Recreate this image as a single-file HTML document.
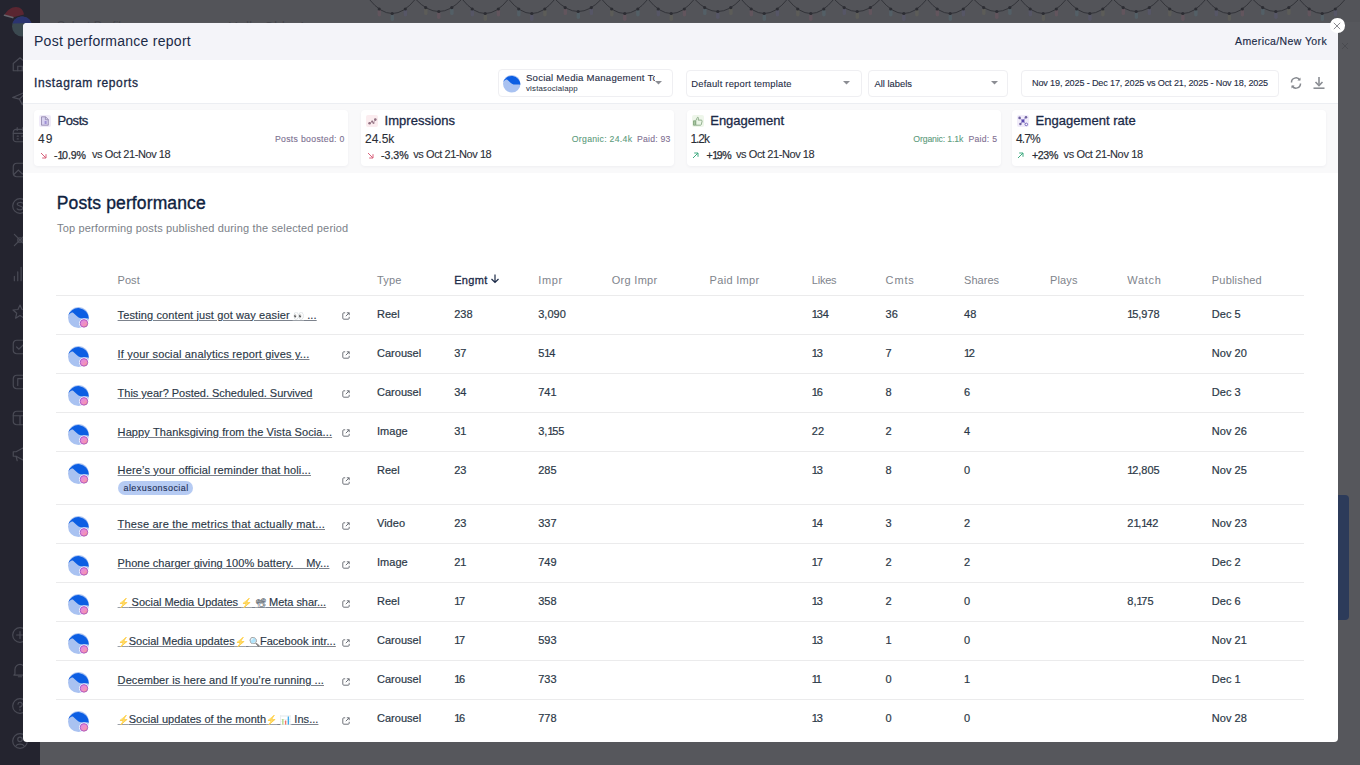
<!DOCTYPE html><html><head><meta charset="utf-8"><style>
*{box-sizing:border-box}
html,body{margin:0;padding:0}
body{width:1360px;height:765px;overflow:hidden;position:relative;background:#56575c;font-family:"Liberation Sans",sans-serif}
.t{position:absolute;white-space:nowrap;line-height:1}
.abs{position:absolute}
svg{position:absolute;overflow:visible}
.em{font-size:9px;opacity:0.75}
</style></head><body>
<svg style="left:0;top:0" width="0" height="0"><defs><linearGradient id="ig" x1="0" y1="0" x2="1" y2="1"><stop offset="0" stop-color="#d68ae8"/><stop offset="0.6" stop-color="#f28fc2"/><stop offset="1" stop-color="#f4a56a"/></linearGradient></defs></svg><div class="abs" style="left:0px;top:0px;width:40px;height:765px;background:#24242f"></div>
<div class="abs" style="left:40px;top:0px;width:1320px;height:22px;background:#535459"></div>
<svg style="left:0;top:0" width="1360" height="22" viewBox="0 0 1360 22"><path d="M369 -1 Q392.25 28 415.5 -1" fill="none" stroke="#2f3036" stroke-width="0.9"/><rect x="377.6" y="9.5" width="3.4" height="7" rx="1.7" fill="#7a5863" opacity="0.4"/><circle cx="379.2" cy="9.0" r="1.6" fill="#2c2d33"/><rect x="390.6" y="14.0" width="3.4" height="7" rx="1.7" fill="#56707a" opacity="0.4"/><circle cx="392.2" cy="13.5" r="1.6" fill="#2c2d33"/><rect x="403.7" y="9.5" width="3.4" height="7" rx="1.7" fill="#5d5a7a" opacity="0.4"/><circle cx="405.3" cy="9.0" r="1.6" fill="#2c2d33"/><path d="M415.5 -1 Q438.75 24 462.0 -1" fill="none" stroke="#2f3036" stroke-width="0.9"/><rect x="424.1" y="8.1" width="3.4" height="7" rx="1.7" fill="#6b6a58" opacity="0.4"/><circle cx="425.7" cy="7.6" r="1.6" fill="#2c2d33"/><rect x="437.1" y="12.0" width="3.4" height="7" rx="1.7" fill="#7a5863" opacity="0.4"/><circle cx="438.8" cy="11.5" r="1.6" fill="#2c2d33"/><rect x="450.2" y="8.1" width="3.4" height="7" rx="1.7" fill="#56707a" opacity="0.4"/><circle cx="451.8" cy="7.6" r="1.6" fill="#2c2d33"/><path d="M462.0 -1 Q485.25 28 508.5 -1" fill="none" stroke="#2f3036" stroke-width="0.9"/><rect x="470.6" y="9.5" width="3.4" height="7" rx="1.7" fill="#5d5a7a" opacity="0.4"/><circle cx="472.2" cy="9.0" r="1.6" fill="#2c2d33"/><rect x="483.6" y="14.0" width="3.4" height="7" rx="1.7" fill="#6b6a58" opacity="0.4"/><circle cx="485.2" cy="13.5" r="1.6" fill="#2c2d33"/><rect x="496.7" y="9.5" width="3.4" height="7" rx="1.7" fill="#7a5863" opacity="0.4"/><circle cx="498.3" cy="9.0" r="1.6" fill="#2c2d33"/><path d="M508.5 -1 Q531.75 28 555.0 -1" fill="none" stroke="#2f3036" stroke-width="0.9"/><rect x="517.1" y="9.5" width="3.4" height="7" rx="1.7" fill="#56707a" opacity="0.4"/><circle cx="518.7" cy="9.0" r="1.6" fill="#2c2d33"/><rect x="530.1" y="14.0" width="3.4" height="7" rx="1.7" fill="#5d5a7a" opacity="0.4"/><circle cx="531.8" cy="13.5" r="1.6" fill="#2c2d33"/><rect x="543.2" y="9.5" width="3.4" height="7" rx="1.7" fill="#6b6a58" opacity="0.4"/><circle cx="544.8" cy="9.0" r="1.6" fill="#2c2d33"/><path d="M555.0 -1 Q578.25 24 601.5 -1" fill="none" stroke="#2f3036" stroke-width="0.9"/><rect x="563.6" y="8.1" width="3.4" height="7" rx="1.7" fill="#7a5863" opacity="0.4"/><circle cx="565.2" cy="7.6" r="1.6" fill="#2c2d33"/><rect x="576.6" y="12.0" width="3.4" height="7" rx="1.7" fill="#56707a" opacity="0.4"/><circle cx="578.2" cy="11.5" r="1.6" fill="#2c2d33"/><rect x="589.7" y="8.1" width="3.4" height="7" rx="1.7" fill="#5d5a7a" opacity="0.4"/><circle cx="591.3" cy="7.6" r="1.6" fill="#2c2d33"/><path d="M601.5 -1 Q624.75 28 648.0 -1" fill="none" stroke="#2f3036" stroke-width="0.9"/><rect x="610.1" y="9.5" width="3.4" height="7" rx="1.7" fill="#6b6a58" opacity="0.4"/><circle cx="611.7" cy="9.0" r="1.6" fill="#2c2d33"/><rect x="623.1" y="14.0" width="3.4" height="7" rx="1.7" fill="#7a5863" opacity="0.4"/><circle cx="624.8" cy="13.5" r="1.6" fill="#2c2d33"/><rect x="636.2" y="9.5" width="3.4" height="7" rx="1.7" fill="#56707a" opacity="0.4"/><circle cx="637.8" cy="9.0" r="1.6" fill="#2c2d33"/><path d="M648.0 -1 Q671.25 28 694.5 -1" fill="none" stroke="#2f3036" stroke-width="0.9"/><rect x="656.6" y="9.5" width="3.4" height="7" rx="1.7" fill="#5d5a7a" opacity="0.4"/><circle cx="658.2" cy="9.0" r="1.6" fill="#2c2d33"/><rect x="669.6" y="14.0" width="3.4" height="7" rx="1.7" fill="#6b6a58" opacity="0.4"/><circle cx="671.2" cy="13.5" r="1.6" fill="#2c2d33"/><rect x="682.7" y="9.5" width="3.4" height="7" rx="1.7" fill="#7a5863" opacity="0.4"/><circle cx="684.3" cy="9.0" r="1.6" fill="#2c2d33"/><path d="M694.5 -1 Q717.75 24 741.0 -1" fill="none" stroke="#2f3036" stroke-width="0.9"/><rect x="703.1" y="8.1" width="3.4" height="7" rx="1.7" fill="#56707a" opacity="0.4"/><circle cx="704.7" cy="7.6" r="1.6" fill="#2c2d33"/><rect x="716.1" y="12.0" width="3.4" height="7" rx="1.7" fill="#5d5a7a" opacity="0.4"/><circle cx="717.8" cy="11.5" r="1.6" fill="#2c2d33"/><rect x="729.2" y="8.1" width="3.4" height="7" rx="1.7" fill="#6b6a58" opacity="0.4"/><circle cx="730.8" cy="7.6" r="1.6" fill="#2c2d33"/><path d="M741.0 -1 Q764.25 28 787.5 -1" fill="none" stroke="#2f3036" stroke-width="0.9"/><rect x="749.6" y="9.5" width="3.4" height="7" rx="1.7" fill="#7a5863" opacity="0.4"/><circle cx="751.2" cy="9.0" r="1.6" fill="#2c2d33"/><rect x="762.6" y="14.0" width="3.4" height="7" rx="1.7" fill="#56707a" opacity="0.4"/><circle cx="764.2" cy="13.5" r="1.6" fill="#2c2d33"/><rect x="775.7" y="9.5" width="3.4" height="7" rx="1.7" fill="#5d5a7a" opacity="0.4"/><circle cx="777.3" cy="9.0" r="1.6" fill="#2c2d33"/><path d="M787.5 -1 Q810.75 28 834.0 -1" fill="none" stroke="#2f3036" stroke-width="0.9"/><rect x="796.1" y="9.5" width="3.4" height="7" rx="1.7" fill="#6b6a58" opacity="0.4"/><circle cx="797.7" cy="9.0" r="1.6" fill="#2c2d33"/><rect x="809.1" y="14.0" width="3.4" height="7" rx="1.7" fill="#7a5863" opacity="0.4"/><circle cx="810.8" cy="13.5" r="1.6" fill="#2c2d33"/><rect x="822.2" y="9.5" width="3.4" height="7" rx="1.7" fill="#56707a" opacity="0.4"/><circle cx="823.8" cy="9.0" r="1.6" fill="#2c2d33"/><path d="M834.0 -1 Q857.25 24 880.5 -1" fill="none" stroke="#2f3036" stroke-width="0.9"/><rect x="842.6" y="8.1" width="3.4" height="7" rx="1.7" fill="#5d5a7a" opacity="0.4"/><circle cx="844.2" cy="7.6" r="1.6" fill="#2c2d33"/><rect x="855.6" y="12.0" width="3.4" height="7" rx="1.7" fill="#6b6a58" opacity="0.4"/><circle cx="857.2" cy="11.5" r="1.6" fill="#2c2d33"/><rect x="868.7" y="8.1" width="3.4" height="7" rx="1.7" fill="#7a5863" opacity="0.4"/><circle cx="870.3" cy="7.6" r="1.6" fill="#2c2d33"/><path d="M880.5 -1 Q903.75 28 927.0 -1" fill="none" stroke="#2f3036" stroke-width="0.9"/><rect x="889.1" y="9.5" width="3.4" height="7" rx="1.7" fill="#56707a" opacity="0.4"/><circle cx="890.7" cy="9.0" r="1.6" fill="#2c2d33"/><rect x="902.1" y="14.0" width="3.4" height="7" rx="1.7" fill="#5d5a7a" opacity="0.4"/><circle cx="903.8" cy="13.5" r="1.6" fill="#2c2d33"/><rect x="915.2" y="9.5" width="3.4" height="7" rx="1.7" fill="#6b6a58" opacity="0.4"/><circle cx="916.8" cy="9.0" r="1.6" fill="#2c2d33"/><path d="M927.0 -1 Q950.25 28 973.5 -1" fill="none" stroke="#2f3036" stroke-width="0.9"/><rect x="935.6" y="9.5" width="3.4" height="7" rx="1.7" fill="#7a5863" opacity="0.4"/><circle cx="937.2" cy="9.0" r="1.6" fill="#2c2d33"/><rect x="948.6" y="14.0" width="3.4" height="7" rx="1.7" fill="#56707a" opacity="0.4"/><circle cx="950.2" cy="13.5" r="1.6" fill="#2c2d33"/><rect x="961.7" y="9.5" width="3.4" height="7" rx="1.7" fill="#5d5a7a" opacity="0.4"/><circle cx="963.3" cy="9.0" r="1.6" fill="#2c2d33"/><path d="M973.5 -1 Q996.75 24 1020.0 -1" fill="none" stroke="#2f3036" stroke-width="0.9"/><rect x="982.1" y="8.1" width="3.4" height="7" rx="1.7" fill="#6b6a58" opacity="0.4"/><circle cx="983.7" cy="7.6" r="1.6" fill="#2c2d33"/><rect x="995.1" y="12.0" width="3.4" height="7" rx="1.7" fill="#7a5863" opacity="0.4"/><circle cx="996.8" cy="11.5" r="1.6" fill="#2c2d33"/><rect x="1008.2" y="8.1" width="3.4" height="7" rx="1.7" fill="#56707a" opacity="0.4"/><circle cx="1009.8" cy="7.6" r="1.6" fill="#2c2d33"/><path d="M1020.0 -1 Q1043.25 28 1066.5 -1" fill="none" stroke="#2f3036" stroke-width="0.9"/><rect x="1028.6" y="9.5" width="3.4" height="7" rx="1.7" fill="#5d5a7a" opacity="0.4"/><circle cx="1030.2" cy="9.0" r="1.6" fill="#2c2d33"/><rect x="1041.7" y="14.0" width="3.4" height="7" rx="1.7" fill="#6b6a58" opacity="0.4"/><circle cx="1043.2" cy="13.5" r="1.6" fill="#2c2d33"/><rect x="1054.7" y="9.5" width="3.4" height="7" rx="1.7" fill="#7a5863" opacity="0.4"/><circle cx="1056.3" cy="9.0" r="1.6" fill="#2c2d33"/><path d="M1066.5 -1 Q1089.75 28 1113.0 -1" fill="none" stroke="#2f3036" stroke-width="0.9"/><rect x="1075.1" y="9.5" width="3.4" height="7" rx="1.7" fill="#56707a" opacity="0.4"/><circle cx="1076.7" cy="9.0" r="1.6" fill="#2c2d33"/><rect x="1088.2" y="14.0" width="3.4" height="7" rx="1.7" fill="#5d5a7a" opacity="0.4"/><circle cx="1089.8" cy="13.5" r="1.6" fill="#2c2d33"/><rect x="1101.2" y="9.5" width="3.4" height="7" rx="1.7" fill="#6b6a58" opacity="0.4"/><circle cx="1102.8" cy="9.0" r="1.6" fill="#2c2d33"/><path d="M1113.0 -1 Q1136.25 24 1159.5 -1" fill="none" stroke="#2f3036" stroke-width="0.9"/><rect x="1121.6" y="8.1" width="3.4" height="7" rx="1.7" fill="#7a5863" opacity="0.4"/><circle cx="1123.2" cy="7.6" r="1.6" fill="#2c2d33"/><rect x="1134.7" y="12.0" width="3.4" height="7" rx="1.7" fill="#56707a" opacity="0.4"/><circle cx="1136.2" cy="11.5" r="1.6" fill="#2c2d33"/><rect x="1147.7" y="8.1" width="3.4" height="7" rx="1.7" fill="#5d5a7a" opacity="0.4"/><circle cx="1149.3" cy="7.6" r="1.6" fill="#2c2d33"/><path d="M1159.5 -1 Q1182.75 28 1206.0 -1" fill="none" stroke="#2f3036" stroke-width="0.9"/><rect x="1168.1" y="9.5" width="3.4" height="7" rx="1.7" fill="#6b6a58" opacity="0.4"/><circle cx="1169.7" cy="9.0" r="1.6" fill="#2c2d33"/><rect x="1181.2" y="14.0" width="3.4" height="7" rx="1.7" fill="#7a5863" opacity="0.4"/><circle cx="1182.8" cy="13.5" r="1.6" fill="#2c2d33"/><rect x="1194.2" y="9.5" width="3.4" height="7" rx="1.7" fill="#56707a" opacity="0.4"/><circle cx="1195.8" cy="9.0" r="1.6" fill="#2c2d33"/><path d="M1206.0 -1 Q1229.25 28 1252.5 -1" fill="none" stroke="#2f3036" stroke-width="0.9"/><rect x="1214.6" y="9.5" width="3.4" height="7" rx="1.7" fill="#5d5a7a" opacity="0.4"/><circle cx="1216.2" cy="9.0" r="1.6" fill="#2c2d33"/><rect x="1227.7" y="14.0" width="3.4" height="7" rx="1.7" fill="#6b6a58" opacity="0.4"/><circle cx="1229.2" cy="13.5" r="1.6" fill="#2c2d33"/><rect x="1240.7" y="9.5" width="3.4" height="7" rx="1.7" fill="#7a5863" opacity="0.4"/><circle cx="1242.3" cy="9.0" r="1.6" fill="#2c2d33"/><path d="M1252.5 -1 Q1275.75 24 1299.0 -1" fill="none" stroke="#2f3036" stroke-width="0.9"/><rect x="1261.1" y="8.1" width="3.4" height="7" rx="1.7" fill="#56707a" opacity="0.4"/><circle cx="1262.7" cy="7.6" r="1.6" fill="#2c2d33"/><rect x="1274.2" y="12.0" width="3.4" height="7" rx="1.7" fill="#5d5a7a" opacity="0.4"/><circle cx="1275.8" cy="11.5" r="1.6" fill="#2c2d33"/><rect x="1287.2" y="8.1" width="3.4" height="7" rx="1.7" fill="#6b6a58" opacity="0.4"/><circle cx="1288.8" cy="7.6" r="1.6" fill="#2c2d33"/><path d="M1299.0 -1 Q1322.25 28 1345.5 -1" fill="none" stroke="#2f3036" stroke-width="0.9"/><rect x="1307.6" y="9.5" width="3.4" height="7" rx="1.7" fill="#7a5863" opacity="0.4"/><circle cx="1309.2" cy="9.0" r="1.6" fill="#2c2d33"/><rect x="1320.7" y="14.0" width="3.4" height="7" rx="1.7" fill="#56707a" opacity="0.4"/><circle cx="1322.2" cy="13.5" r="1.6" fill="#2c2d33"/><rect x="1333.7" y="9.5" width="3.4" height="7" rx="1.7" fill="#5d5a7a" opacity="0.4"/><circle cx="1335.3" cy="9.0" r="1.6" fill="#2c2d33"/></svg>
<div class="t" style="left:57.00px;top:20.34px;font-size:12px;color:#45464c;">Select Profiles</div>
<div class="t" style="left:228.00px;top:20.15px;font-size:14px;color:#45464c;">Hello Chloe!</div>
<svg style="left:1341px;top:42px" width="8" height="8"><path d="M1 1L7 7M7 1L1 7" stroke="#4a4b50" stroke-width="1"/></svg>
<div class="abs" style="left:1336px;top:495px;width:13px;height:125px;background:#2c3b5a;border-radius:0 4px 4px 0"></div>
<svg style="left:11px;top:55px" width="18" height="18" viewBox="0 0 16 16"><g fill="none" stroke="#4a4b56" stroke-width="1.05" stroke-linecap="round"><path d="M2 7.5L8 2.5L14 7.5V14H2Z" stroke-linejoin="round"/><path d="M6 14V10H10V14"/></g></svg>
<svg style="left:11px;top:89px" width="18" height="18" viewBox="0 0 16 16"><g fill="none" stroke="#4a4b56" stroke-width="1.05" stroke-linecap="round"><path d="M1.5 7.5L14.5 2L10 14L7.5 9Z" stroke-linejoin="round"/><path d="M7.5 9L14.5 2"/></g></svg>
<svg style="left:11px;top:126px" width="18" height="18" viewBox="0 0 16 16"><g fill="none" stroke="#4a4b56" stroke-width="1.05" stroke-linecap="round"><rect x="2" y="3" width="12" height="11" rx="2.5"/><path d="M2 6.5H14M5.5 1.5V4M10.5 1.5V4M5.5 9H6.5M9.5 9H10.5M5.5 11.5H6.5"/></g></svg>
<svg style="left:11px;top:161px" width="18" height="18" viewBox="0 0 16 16"><g fill="none" stroke="#4a4b56" stroke-width="1.05" stroke-linecap="round"><rect x="2" y="2" width="12" height="12" rx="3"/><path d="M2.5 12L6.5 8L10 11.5L14 8"/></g></svg>
<svg style="left:11px;top:197px" width="18" height="18" viewBox="0 0 16 16"><g fill="none" stroke="#4a4b56" stroke-width="1.05" stroke-linecap="round"><circle cx="8" cy="8" r="6.5"/><path d="M10.5 5.5C9.5 4.5 5.5 4.5 5.5 6.5C5.5 8.5 10.5 7.5 10.5 9.8C10.5 11.8 6.5 11.8 5.5 10.5"/></g></svg>
<svg style="left:11px;top:231px" width="18" height="18" viewBox="0 0 16 16"><g fill="none" stroke="#4a4b56" stroke-width="1.05" stroke-linecap="round"><path d="M3 3C6 6 10 10 13 13M13 3C10 6 6 10 3 13"/><circle cx="8" cy="8" r="2"/></g></svg>
<svg style="left:11px;top:265px" width="18" height="18" viewBox="0 0 16 16"><g fill="none" stroke="#4a4b56" stroke-width="1.05" stroke-linecap="round"><path d="M3 10V14M6 6V14M9 2V14M12 8V14"/></g></svg>
<svg style="left:11px;top:303px" width="18" height="18" viewBox="0 0 16 16"><g fill="none" stroke="#4a4b56" stroke-width="1.05" stroke-linecap="round"><path d="M8 1.8L9.8 5.8L14.2 6.2L10.9 9.1L11.9 13.5L8 11.2L4.1 13.5L5.1 9.1L1.8 6.2L6.2 5.8Z" stroke-linejoin="round"/></g></svg>
<svg style="left:11px;top:338px" width="18" height="18" viewBox="0 0 16 16"><g fill="none" stroke="#4a4b56" stroke-width="1.05" stroke-linecap="round"><rect x="2" y="2" width="12" height="12" rx="3"/><path d="M5 8L7 10L11 6"/></g></svg>
<svg style="left:11px;top:373px" width="18" height="18" viewBox="0 0 16 16"><g fill="none" stroke="#4a4b56" stroke-width="1.05" stroke-linecap="round"><rect x="2" y="2" width="12" height="12" rx="3"/><path d="M6 5V11M6 5H10"/></g></svg>
<svg style="left:11px;top:409px" width="18" height="18" viewBox="0 0 16 16"><g fill="none" stroke="#4a4b56" stroke-width="1.05" stroke-linecap="round"><rect x="2" y="2" width="12" height="12" rx="3"/><path d="M2 6H14M8 6V14"/></g></svg>
<svg style="left:11px;top:445px" width="18" height="18" viewBox="0 0 16 16"><g fill="none" stroke="#4a4b56" stroke-width="1.05" stroke-linecap="round"><path d="M2 6V10H4.5L11 13.5V2.5L4.5 6Z" stroke-linejoin="round"/><path d="M4.5 10L5.5 14"/></g></svg>
<svg style="left:11px;top:626px" width="18" height="18" viewBox="0 0 16 16"><g fill="none" stroke="#4a4b56" stroke-width="1.05" stroke-linecap="round"><circle cx="8" cy="8" r="6.5"/><path d="M8 5V11M5 8H11"/></g></svg>
<svg style="left:11px;top:661px" width="18" height="18" viewBox="0 0 16 16"><g fill="none" stroke="#4a4b56" stroke-width="1.05" stroke-linecap="round"><path d="M3.5 11.5V7.5A4.5 4.5 0 0 1 12.5 7.5V11.5L13.5 12.5H2.5Z" stroke-linejoin="round"/><path d="M6.5 14H9.5"/></g></svg>
<svg style="left:11px;top:697px" width="18" height="18" viewBox="0 0 16 16"><g fill="none" stroke="#4a4b56" stroke-width="1.05" stroke-linecap="round"><circle cx="8" cy="8" r="6.5"/><path d="M6.2 6.3A1.9 1.9 0 1 1 8 8.5V9.5M8 11.2V11.8"/></g></svg>
<svg style="left:11px;top:732px" width="18" height="18" viewBox="0 0 16 16"><g fill="none" stroke="#4a4b56" stroke-width="1.05" stroke-linecap="round"><circle cx="8" cy="8" r="6.5"/><circle cx="8" cy="6.5" r="2"/><path d="M4.5 12.2C5.5 10.2 10.5 10.2 11.5 12.2"/></g></svg>
<svg style="left:0;top:0" width="40" height="40" viewBox="0 0 40 40"><circle cx="22" cy="26.5" r="10" fill="#3b4950"/><path d="M12.5 23.5C14 18.5 18 16.5 22 16.5C26 16.5 30 18.5 31.5 23Z" fill="#2b3470"/><path d="M4.5 15C7 10 11.5 7 16 7C20.5 7 23.5 10 24 14.5C20 15.5 16 16.5 12.5 17.5Z" fill="#5a2631"/><path d="M4.5 15.2L12.8 17.6" stroke="#66676e" stroke-width="1.6" stroke-linecap="round"/></svg>
<div class="abs" style="left:23px;top:22.5px;width:1314.5px;height:719.7px;background:#fff;border-radius:4px;overflow:hidden"><div class="abs" style="left:0px;top:0px;width:1314.5px;height:37.3px;background:#f4f4f9"></div>
<div class="abs" style="left:0px;top:80px;width:1314.5px;height:1px;background:#eceef2"></div>
<div class="abs" style="left:0px;top:81px;width:1314.5px;height:69px;background:#f9f9fa"></div>
</div>
<div class="abs" style="left:1330px;top:18px;width:14.5px;height:14.5px;border-radius:50%;background:#fff"></div><svg style="left:1333px;top:21.5px" width="8" height="8"><path d="M0.8 0.8L7.2 7.2M7.2 0.8L0.8 7.2" stroke="#8a8a90" stroke-width="1"/></svg>
<div class="t" style="left:34.00px;top:34.35px;font-size:14px;color:#1b2a47;letter-spacing:0.261px;">Post performance report</div>
<div class="t" style="left:1235.00px;top:35.61px;font-size:10.5px;color:#1b2a47;letter-spacing:0.394px;-webkit-text-stroke:0.15px #1b2a47;">America/New York</div>
<div class="t" style="left:34.00px;top:76.64px;font-size:12px;color:#1b2a47;letter-spacing:0.622px;-webkit-text-stroke:0.3px #1b2a47;">Instagram reports</div>
<div class="abs" style="left:497.8px;top:69.4px;width:175.59999999999997px;height:27.5px;background:#fff;border:1px solid #efeff2;border-radius:4px"></div>
<div class="abs" style="left:525px;top:72px;width:130px;height:12px;overflow:hidden"><div class="t" style="left:1.00px;top:0.87px;font-size:9.6px;color:#1f2d45;letter-spacing:0.223px;-webkit-text-stroke:0.1px #1f2d45;">Social Media Management Tool</div>
</div>
<div class="t" style="left:526.00px;top:84.90px;font-size:7.8px;color:#2b3446;letter-spacing:0.209px;-webkit-text-stroke:0.05px #2b3446;">vistasocialapp</div>
<svg style="left:654.5px;top:81px" width="7" height="4"><path d="M0 0L7 0L3.5 3.5Z" fill="#8b8d93"/></svg>
<svg style="left:502.7px;top:74.6px" width="17.5" height="17.5" viewBox="0 0 20 20"><circle cx="10" cy="10" r="10" fill="#a9c2f1"/><path d="M0.1 8.6 C1.5 6 3.5 4.6 5.2 5.6 C7.2 7 9.3 10.3 12 10.8 C14.5 11.2 17 10.4 19.8 11.2 A10 10 0 0 0 0.1 8.6Z" fill="#0c5ee3"/></svg>
<div class="abs" style="left:685.5px;top:69.5px;width:176.25px;height:27.0px;background:#fff;border:1px solid #efeff2;border-radius:4px"></div>
<div class="t" style="left:691.25px;top:78.54px;font-size:9.4px;color:#1f2d45;letter-spacing:0.219px;-webkit-text-stroke:0.1px #1f2d45;">Default report template</div>
<svg style="left:842.9px;top:81.3px" width="7" height="4"><path d="M0 0L7 0L3.5 3.5Z" fill="#8b8d93"/></svg>
<div class="abs" style="left:868.25px;top:69.5px;width:140.0px;height:27.0px;background:#fff;border:1px solid #efeff2;border-radius:4px"></div>
<div class="t" style="left:874.50px;top:78.54px;font-size:9.4px;color:#1f2d45;letter-spacing:-0.009px;-webkit-text-stroke:0.1px #1f2d45;">All labels</div>
<svg style="left:990.5px;top:81.3px" width="7" height="4"><path d="M0 0L7 0L3.5 3.5Z" fill="#8b8d93"/></svg>
<div class="abs" style="left:1021.25px;top:69.5px;width:257.5px;height:27.5px;background:#fff;border:1px solid #efeff2;border-radius:4px"></div>
<div class="t" style="left:1032.00px;top:78.60px;font-size:9.1px;color:#1f2d45;letter-spacing:-0.149px;-webkit-text-stroke:0.12px #1f2d45;">Nov 19, 2025 - Dec 17, 2025 vs Oct 21, 2025 - Nov 18, 2025</div>
<svg style="left:1289px;top:76px" width="14" height="14" viewBox="0 0 14 14"><path d="M2.5 6.5A4.5 4.5 0 0 1 10.8 4M11.5 7.5A4.5 4.5 0 0 1 3.2 10" fill="none" stroke="#85888e" stroke-width="1.5"/><path d="M11.5 1.5V4.6H8.4Z" fill="#85888e"/><path d="M2.5 12.5V9.4H5.6Z" fill="#85888e"/></svg>
<svg style="left:1312px;top:76px" width="14" height="14" viewBox="0 0 14 14"><path d="M7 1V8.5" stroke="#8a8d93" stroke-width="1.6"/><path d="M3.5 6L7 9.5L10.5 6" fill="none" stroke="#8a8d93" stroke-width="1.6"/><path d="M1.5 12.2H12.5" stroke="#8a8d93" stroke-width="1.6"/></svg>
<div class="abs" style="left:34px;top:110px;width:314px;height:55.6px;background:#fff;border-radius:4px;box-shadow:0 1px 3px rgba(30,40,70,0.05)"></div>
<div class="abs" style="left:39px;top:115.3px;width:12px;height:11.5px;background:#efeaf8;border-radius:2px"></div>
<svg style="left:39px;top:115.3px" width="12" height="12" viewBox="0 0 12 12"><path d="M2.5 1.8H6.6L9.3 4.5V10.2H2.5Z" fill="#d9d2f0" stroke="#8a80a8" stroke-width="0.8" stroke-linejoin="round"/><path d="M6.4 1.8V4.7H9.3" fill="none" stroke="#8a80a8" stroke-width="0.7"/><rect x="5.6" y="6" width="2" height="3" fill="#9f90d6"/></svg>
<div class="t" style="left:57.60px;top:114.00px;font-size:13px;color:#1b2a47;letter-spacing:-0.454px;-webkit-text-stroke:0.3px #1b2a47;">Posts</div>
<div class="t" style="left:38.00px;top:133.24px;font-size:12px;color:#2a2e36;letter-spacing:1.091px;-webkit-text-stroke:0.1px #2a2e36;">49</div>
<svg style="left:39.5px;top:151.8px" width="7" height="7"><path d="M1 1L6 6M6 2.2V6H2.2" fill="none" stroke="#d8607a" stroke-width="1"/></svg>
<div class="t" style="left:54.00px;top:149.53px;font-size:10.6px;color:#2a2e36;letter-spacing:-0.066px;-webkit-text-stroke:0.25px #2a2e36;">-<span style="letter-spacing:-1.3px">1</span>0.9%</div>
<div class="t" style="left:92.00px;top:149.19px;font-size:11px;color:#2a2e36;letter-spacing:-0.419px;-webkit-text-stroke:0.1px #2a2e36;">vs Oct 21-Nov 18</div>
<div class="t" style="left:274.95px;top:134.94px;font-size:8.7px;color:#7b6f90;letter-spacing:0.315px;-webkit-text-stroke:0.1px #7b6f90;">Posts boosted: 0</div>
<div class="abs" style="left:361px;top:110px;width:313px;height:55.6px;background:#fff;border-radius:4px;box-shadow:0 1px 3px rgba(30,40,70,0.05)"></div>
<div class="abs" style="left:366px;top:115.3px;width:12px;height:11.5px;background:#fbecef;border-radius:2px"></div>
<svg style="left:366px;top:115.3px" width="12" height="12" viewBox="0 0 12 12"><circle cx="3.6" cy="8.3" r="1.3" fill="#8d6d7d"/><circle cx="6.2" cy="6.6" r="1.1" fill="#8d6d7d"/><circle cx="7.5" cy="8" r="1" fill="#9a7a8a"/><circle cx="9.3" cy="4.6" r="1.3" fill="#8d6d7d"/><path d="M3.6 8.3L6.2 6.6L7.5 8L9.3 4.6" fill="none" stroke="#a08090" stroke-width="0.6"/></svg>
<div class="t" style="left:384.60px;top:114.00px;font-size:13px;color:#1b2a47;letter-spacing:0.022px;-webkit-text-stroke:0.3px #1b2a47;">Impressions</div>
<div class="t" style="left:365.00px;top:133.24px;font-size:12px;color:#2a2e36;letter-spacing:-0.015px;-webkit-text-stroke:0.1px #2a2e36;">24.5k</div>
<svg style="left:366.5px;top:151.8px" width="7" height="7"><path d="M1 1L6 6M6 2.2V6H2.2" fill="none" stroke="#d8607a" stroke-width="1"/></svg>
<div class="t" style="left:381.00px;top:149.53px;font-size:10.6px;color:#2a2e36;letter-spacing:0.003px;-webkit-text-stroke:0.25px #2a2e36;">-3.3%</div>
<div class="t" style="left:413.30px;top:149.19px;font-size:11px;color:#2a2e36;letter-spacing:-0.439px;-webkit-text-stroke:0.1px #2a2e36;">vs Oct 21-Nov 18</div>
<div class="t" style="left:637.10px;top:134.94px;font-size:8.7px;color:#7f7092;letter-spacing:0.201px;-webkit-text-stroke:0.1px #7f7092;">Paid: 93</div>
<div class="t" style="left:571.80px;top:134.94px;font-size:8.7px;color:#5c9b7c;letter-spacing:0.285px;-webkit-text-stroke:0.1px #5c9b7c;">Organic: 24.4k</div>
<div class="abs" style="left:686.6px;top:110px;width:314.0px;height:55.6px;background:#fff;border-radius:4px;box-shadow:0 1px 3px rgba(30,40,70,0.05)"></div>
<div class="abs" style="left:691.6px;top:115.3px;width:12px;height:11.5px;background:#eef6ea;border-radius:2px"></div>
<svg style="left:691.6px;top:115.3px" width="12" height="12" viewBox="0 0 12 12"><path d="M1.5 5.8H3.5V10.2H1.5Z" fill="#a8c7a0" stroke="#7c9f78" stroke-width="0.8"/><path d="M3.8 5.6L5.5 2.3C6.3 2.2 6.7 2.8 6.5 3.6L6.1 5.1H9.2C9.9 5.1 10.3 5.7 10.1 6.3L9.3 9.6C9.2 10 8.9 10.2 8.5 10.2H3.8Z" fill="#eaf5e6" stroke="#7c9f78" stroke-width="0.8" stroke-linejoin="round"/></svg>
<div class="t" style="left:710.20px;top:114.00px;font-size:13px;color:#1b2a47;letter-spacing:0.018px;-webkit-text-stroke:0.3px #1b2a47;">Engagement</div>
<div class="t" style="left:690.60px;top:133.24px;font-size:12px;color:#2a2e36;letter-spacing:-0.964px;-webkit-text-stroke:0.1px #2a2e36;"><span style="letter-spacing:-1.3px">1</span>.2k</div>
<svg style="left:691.8000000000001px;top:151.8px" width="7" height="7"><path d="M1 6L6 1M2.2 1H6V4.8" fill="none" stroke="#3faa80" stroke-width="1"/></svg>
<div class="t" style="left:706.60px;top:149.53px;font-size:10.6px;color:#2a2e36;letter-spacing:-0.565px;-webkit-text-stroke:0.25px #2a2e36;">+<span style="letter-spacing:-1.3px">1</span>9%</div>
<div class="t" style="left:736.00px;top:149.19px;font-size:11px;color:#2a2e36;letter-spacing:-0.419px;-webkit-text-stroke:0.1px #2a2e36;">vs Oct 21-Nov 18</div>
<div class="t" style="left:968.50px;top:134.94px;font-size:8.7px;color:#7f7092;letter-spacing:0.242px;-webkit-text-stroke:0.1px #7f7092;">Paid: 5</div>
<div class="t" style="left:913.30px;top:134.94px;font-size:8.7px;color:#5c9b7c;letter-spacing:-0.131px;-webkit-text-stroke:0.1px #5c9b7c;">Organic: 1.1k</div>
<div class="abs" style="left:1012px;top:110px;width:314px;height:55.6px;background:#fff;border-radius:4px;box-shadow:0 1px 3px rgba(30,40,70,0.05)"></div>
<div class="abs" style="left:1017px;top:115.3px;width:12px;height:11.5px;background:#f1ecfa;border-radius:2px"></div>
<svg style="left:1017px;top:115.3px" width="12" height="12" viewBox="0 0 12 12"><path d="M2.6 2.9L9.5 9.6M8.9 2.4L3.3 9" stroke="#8a78c8" stroke-width="0.8"/><circle cx="2.6" cy="2.9" r="1.3" fill="#6e62a0"/><circle cx="9" cy="2.3" r="1.3" fill="#6e62a0"/><circle cx="3.4" cy="9" r="1.2" fill="#6e62a0"/><circle cx="9.3" cy="9.4" r="1.3" fill="#fff" stroke="#6a58b8" stroke-width="0.9"/><circle cx="6" cy="5.9" r="1.6" fill="#5a48b0"/></svg>
<div class="t" style="left:1035.60px;top:114.00px;font-size:13px;color:#1b2a47;letter-spacing:0.026px;-webkit-text-stroke:0.3px #1b2a47;">Engagement rate</div>
<div class="t" style="left:1016.00px;top:133.24px;font-size:12px;color:#2a2e36;letter-spacing:-0.853px;-webkit-text-stroke:0.1px #2a2e36;">4.7%</div>
<svg style="left:1017.2px;top:151.8px" width="7" height="7"><path d="M1 6L6 1M2.2 1H6V4.8" fill="none" stroke="#3faa80" stroke-width="1"/></svg>
<div class="t" style="left:1032.00px;top:149.53px;font-size:10.6px;color:#2a2e36;letter-spacing:-0.364px;-webkit-text-stroke:0.25px #2a2e36;">+23%</div>
<div class="t" style="left:1063.50px;top:149.19px;font-size:11px;color:#2a2e36;letter-spacing:-0.359px;-webkit-text-stroke:0.1px #2a2e36;">vs Oct 21-Nov 18</div>
<div class="t" style="left:56.80px;top:194.59px;font-size:17.5px;color:#0f2240;letter-spacing:0.127px;-webkit-text-stroke:0.35px #0f2240;">Posts performance</div>
<div class="t" style="left:57.00px;top:222.89px;font-size:11px;color:#7b7f88;letter-spacing:0.155px;">Top performing posts published during the selected period</div>
<div class="t" style="left:117.60px;top:274.69px;font-size:11px;color:#80848c;letter-spacing:0.028px;">Post</div>
<div class="t" style="left:377.00px;top:274.69px;font-size:11px;color:#80848c;letter-spacing:0.214px;">Type</div>
<div class="t" style="left:454.20px;top:274.69px;font-size:11px;color:#1b2a47;letter-spacing:0.326px;-webkit-text-stroke:0.3px #1b2a47;">Engmt</div>
<div class="t" style="left:538.20px;top:274.69px;font-size:11px;color:#80848c;letter-spacing:0.633px;">Impr</div>
<div class="t" style="left:611.70px;top:274.69px;font-size:11px;color:#80848c;letter-spacing:0.299px;">Org Impr</div>
<div class="t" style="left:709.60px;top:274.69px;font-size:11px;color:#80848c;letter-spacing:0.303px;">Paid Impr</div>
<div class="t" style="left:811.80px;top:274.69px;font-size:11px;color:#80848c;letter-spacing:-0.222px;">Likes</div>
<div class="t" style="left:885.60px;top:274.69px;font-size:11px;color:#80848c;letter-spacing:0.843px;">Cmts</div>
<div class="t" style="left:964.00px;top:274.69px;font-size:11px;color:#80848c;letter-spacing:0.048px;">Shares</div>
<div class="t" style="left:1050.00px;top:274.69px;font-size:11px;color:#80848c;letter-spacing:0.148px;">Plays</div>
<div class="t" style="left:1127.30px;top:274.69px;font-size:11px;color:#80848c;letter-spacing:0.709px;">Watch</div>
<div class="t" style="left:1211.80px;top:274.69px;font-size:11px;color:#80848c;letter-spacing:0.196px;">Published</div>
<svg style="left:490px;top:274px" width="10" height="10"><path d="M5 0.5V8.5M1.5 5L5 8.5L8.5 5" fill="none" stroke="#1b2a47" stroke-width="1.2"/></svg>
<div class="abs" style="left:56px;top:294.8px;width:1248px;height:1px;background:#ebebec"></div>
<div class="abs" style="left:56px;top:334.0px;width:1248px;height:1px;background:#ebebec"></div>
<div class="abs" style="left:56px;top:373.0px;width:1248px;height:1px;background:#ebebec"></div>
<div class="abs" style="left:56px;top:411.9px;width:1248px;height:1px;background:#ebebec"></div>
<div class="abs" style="left:56px;top:451.1px;width:1248px;height:1px;background:#ebebec"></div>
<div class="abs" style="left:56px;top:504.1px;width:1248px;height:1px;background:#ebebec"></div>
<div class="abs" style="left:56px;top:543.1px;width:1248px;height:1px;background:#ebebec"></div>
<div class="abs" style="left:56px;top:582.1px;width:1248px;height:1px;background:#ebebec"></div>
<div class="abs" style="left:56px;top:621.1px;width:1248px;height:1px;background:#ebebec"></div>
<div class="abs" style="left:56px;top:660.1px;width:1248px;height:1px;background:#ebebec"></div>
<div class="abs" style="left:56px;top:699.1px;width:1248px;height:1px;background:#ebebec"></div>
<svg style="left:68.1px;top:306.7px" width="21" height="21" viewBox="0 0 20 20"><circle cx="10" cy="10" r="10" fill="#a9c2f1"/><path d="M0.1 8.6 C1.5 6 3.5 4.6 5.2 5.6 C7.2 7 9.3 10.3 12 10.8 C14.5 11.2 17 10.4 19.8 11.2 A10 10 0 0 0 0.1 8.6Z" fill="#0c5ee3"/><circle cx="15.2" cy="15.6" r="4.6" fill="#fff"/><circle cx="15.2" cy="15.6" r="3.6" fill="url(#ig)" stroke="#a24bc4" stroke-width="0.8"/></svg>
<div class="t" style="left:117.60px;top:309.89px;font-size:11px;color:#2b3847;letter-spacing:0.113px;-webkit-text-stroke:0.15px #2b3847;text-decoration:underline;text-decoration-color:#7c828c;text-underline-offset:1.2px;text-decoration-thickness:1px;">Testing content just got way easier <span class="em">👀</span> ...</div>
<svg style="left:341.5px;top:312.2px" width="8" height="8" viewBox="0 0 8 8"><path d="M3.2 0.8H1.8A1 1 0 0 0 0.8 1.8V6.2A1 1 0 0 0 1.8 7.2H6.2A1 1 0 0 0 7.2 6.2V4.8" fill="none" stroke="#6f737a" stroke-width="1"/><path d="M3.8 4.2L7.2 0.8M4.8 0.8H7.2V3.2" fill="none" stroke="#6f737a" stroke-width="1"/></svg>
<div class="t" style="left:377.00px;top:309.19px;font-size:11px;color:#2b3847;letter-spacing:0.020px;-webkit-text-stroke:0.2px #2b3847;">Reel</div>
<div class="t" style="left:454.20px;top:309.19px;font-size:11px;color:#2b3847;letter-spacing:0.020px;-webkit-text-stroke:0.2px #2b3847;">238</div>
<div class="t" style="left:538.20px;top:309.19px;font-size:11px;color:#2b3847;letter-spacing:0.020px;-webkit-text-stroke:0.2px #2b3847;">3,090</div>
<div class="t" style="left:811.80px;top:309.19px;font-size:11px;color:#2b3847;letter-spacing:0.020px;-webkit-text-stroke:0.2px #2b3847;"><span style="letter-spacing:-1.3px">1</span>34</div>
<div class="t" style="left:885.60px;top:309.19px;font-size:11px;color:#2b3847;letter-spacing:0.020px;-webkit-text-stroke:0.2px #2b3847;">36</div>
<div class="t" style="left:964.00px;top:309.19px;font-size:11px;color:#2b3847;letter-spacing:0.020px;-webkit-text-stroke:0.2px #2b3847;">48</div>
<div class="t" style="left:1127.30px;top:309.19px;font-size:11px;color:#2b3847;letter-spacing:0.020px;-webkit-text-stroke:0.2px #2b3847;"><span style="letter-spacing:-1.3px">1</span>5,978</div>
<div class="t" style="left:1211.80px;top:309.19px;font-size:11px;color:#2b3847;letter-spacing:0.020px;-webkit-text-stroke:0.2px #2b3847;">Dec 5</div>
<svg style="left:68.1px;top:345.9px" width="21" height="21" viewBox="0 0 20 20"><circle cx="10" cy="10" r="10" fill="#a9c2f1"/><path d="M0.1 8.6 C1.5 6 3.5 4.6 5.2 5.6 C7.2 7 9.3 10.3 12 10.8 C14.5 11.2 17 10.4 19.8 11.2 A10 10 0 0 0 0.1 8.6Z" fill="#0c5ee3"/><circle cx="15.2" cy="15.6" r="4.6" fill="#fff"/><circle cx="15.2" cy="15.6" r="3.6" fill="url(#ig)" stroke="#a24bc4" stroke-width="0.8"/></svg>
<div class="t" style="left:117.60px;top:349.09px;font-size:11px;color:#2b3847;letter-spacing:0.162px;-webkit-text-stroke:0.15px #2b3847;text-decoration:underline;text-decoration-color:#7c828c;text-underline-offset:1.2px;text-decoration-thickness:1px;">If your social analytics report gives y...</div>
<svg style="left:341.5px;top:351.4px" width="8" height="8" viewBox="0 0 8 8"><path d="M3.2 0.8H1.8A1 1 0 0 0 0.8 1.8V6.2A1 1 0 0 0 1.8 7.2H6.2A1 1 0 0 0 7.2 6.2V4.8" fill="none" stroke="#6f737a" stroke-width="1"/><path d="M3.8 4.2L7.2 0.8M4.8 0.8H7.2V3.2" fill="none" stroke="#6f737a" stroke-width="1"/></svg>
<div class="t" style="left:377.00px;top:348.39px;font-size:11px;color:#2b3847;letter-spacing:0.020px;-webkit-text-stroke:0.2px #2b3847;">Carousel</div>
<div class="t" style="left:454.20px;top:348.39px;font-size:11px;color:#2b3847;letter-spacing:0.020px;-webkit-text-stroke:0.2px #2b3847;">37</div>
<div class="t" style="left:538.20px;top:348.39px;font-size:11px;color:#2b3847;letter-spacing:0.020px;-webkit-text-stroke:0.2px #2b3847;">5<span style="letter-spacing:-1.3px">1</span>4</div>
<div class="t" style="left:811.80px;top:348.39px;font-size:11px;color:#2b3847;letter-spacing:0.020px;-webkit-text-stroke:0.2px #2b3847;"><span style="letter-spacing:-1.3px">1</span>3</div>
<div class="t" style="left:885.60px;top:348.39px;font-size:11px;color:#2b3847;letter-spacing:0.020px;-webkit-text-stroke:0.2px #2b3847;">7</div>
<div class="t" style="left:964.00px;top:348.39px;font-size:11px;color:#2b3847;letter-spacing:0.020px;-webkit-text-stroke:0.2px #2b3847;"><span style="letter-spacing:-1.3px">1</span>2</div>
<div class="t" style="left:1211.80px;top:348.39px;font-size:11px;color:#2b3847;letter-spacing:0.020px;-webkit-text-stroke:0.2px #2b3847;">Nov 20</div>
<svg style="left:68.1px;top:384.9px" width="21" height="21" viewBox="0 0 20 20"><circle cx="10" cy="10" r="10" fill="#a9c2f1"/><path d="M0.1 8.6 C1.5 6 3.5 4.6 5.2 5.6 C7.2 7 9.3 10.3 12 10.8 C14.5 11.2 17 10.4 19.8 11.2 A10 10 0 0 0 0.1 8.6Z" fill="#0c5ee3"/><circle cx="15.2" cy="15.6" r="4.6" fill="#fff"/><circle cx="15.2" cy="15.6" r="3.6" fill="url(#ig)" stroke="#a24bc4" stroke-width="0.8"/></svg>
<div class="t" style="left:117.60px;top:388.09px;font-size:11px;color:#2b3847;letter-spacing:-0.021px;-webkit-text-stroke:0.15px #2b3847;text-decoration:underline;text-decoration-color:#7c828c;text-underline-offset:1.2px;text-decoration-thickness:1px;">This year? Posted. Scheduled. Survived</div>
<svg style="left:341.5px;top:390.4px" width="8" height="8" viewBox="0 0 8 8"><path d="M3.2 0.8H1.8A1 1 0 0 0 0.8 1.8V6.2A1 1 0 0 0 1.8 7.2H6.2A1 1 0 0 0 7.2 6.2V4.8" fill="none" stroke="#6f737a" stroke-width="1"/><path d="M3.8 4.2L7.2 0.8M4.8 0.8H7.2V3.2" fill="none" stroke="#6f737a" stroke-width="1"/></svg>
<div class="t" style="left:377.00px;top:387.39px;font-size:11px;color:#2b3847;letter-spacing:0.020px;-webkit-text-stroke:0.2px #2b3847;">Carousel</div>
<div class="t" style="left:454.20px;top:387.39px;font-size:11px;color:#2b3847;letter-spacing:0.020px;-webkit-text-stroke:0.2px #2b3847;">34</div>
<div class="t" style="left:538.20px;top:387.39px;font-size:11px;color:#2b3847;letter-spacing:0.020px;-webkit-text-stroke:0.2px #2b3847;">74<span style="letter-spacing:-1.3px">1</span></div>
<div class="t" style="left:811.80px;top:387.39px;font-size:11px;color:#2b3847;letter-spacing:0.020px;-webkit-text-stroke:0.2px #2b3847;"><span style="letter-spacing:-1.3px">1</span>6</div>
<div class="t" style="left:885.60px;top:387.39px;font-size:11px;color:#2b3847;letter-spacing:0.020px;-webkit-text-stroke:0.2px #2b3847;">8</div>
<div class="t" style="left:964.00px;top:387.39px;font-size:11px;color:#2b3847;letter-spacing:0.020px;-webkit-text-stroke:0.2px #2b3847;">6</div>
<div class="t" style="left:1211.80px;top:387.39px;font-size:11px;color:#2b3847;letter-spacing:0.020px;-webkit-text-stroke:0.2px #2b3847;">Dec 3</div>
<svg style="left:68.1px;top:423.79999999999995px" width="21" height="21" viewBox="0 0 20 20"><circle cx="10" cy="10" r="10" fill="#a9c2f1"/><path d="M0.1 8.6 C1.5 6 3.5 4.6 5.2 5.6 C7.2 7 9.3 10.3 12 10.8 C14.5 11.2 17 10.4 19.8 11.2 A10 10 0 0 0 0.1 8.6Z" fill="#0c5ee3"/><circle cx="15.2" cy="15.6" r="4.6" fill="#fff"/><circle cx="15.2" cy="15.6" r="3.6" fill="url(#ig)" stroke="#a24bc4" stroke-width="0.8"/></svg>
<div class="t" style="left:117.60px;top:426.99px;font-size:11px;color:#2b3847;letter-spacing:0.109px;-webkit-text-stroke:0.15px #2b3847;text-decoration:underline;text-decoration-color:#7c828c;text-underline-offset:1.2px;text-decoration-thickness:1px;">Happy Thanksgiving from the Vista Socia...</div>
<svg style="left:341.5px;top:429.3px" width="8" height="8" viewBox="0 0 8 8"><path d="M3.2 0.8H1.8A1 1 0 0 0 0.8 1.8V6.2A1 1 0 0 0 1.8 7.2H6.2A1 1 0 0 0 7.2 6.2V4.8" fill="none" stroke="#6f737a" stroke-width="1"/><path d="M3.8 4.2L7.2 0.8M4.8 0.8H7.2V3.2" fill="none" stroke="#6f737a" stroke-width="1"/></svg>
<div class="t" style="left:377.00px;top:426.29px;font-size:11px;color:#2b3847;letter-spacing:0.020px;-webkit-text-stroke:0.2px #2b3847;">Image</div>
<div class="t" style="left:454.20px;top:426.29px;font-size:11px;color:#2b3847;letter-spacing:0.020px;-webkit-text-stroke:0.2px #2b3847;">3<span style="letter-spacing:-1.3px">1</span></div>
<div class="t" style="left:538.20px;top:426.29px;font-size:11px;color:#2b3847;letter-spacing:0.020px;-webkit-text-stroke:0.2px #2b3847;">3,<span style="letter-spacing:-1.3px">1</span>55</div>
<div class="t" style="left:811.80px;top:426.29px;font-size:11px;color:#2b3847;letter-spacing:0.020px;-webkit-text-stroke:0.2px #2b3847;">22</div>
<div class="t" style="left:885.60px;top:426.29px;font-size:11px;color:#2b3847;letter-spacing:0.020px;-webkit-text-stroke:0.2px #2b3847;">2</div>
<div class="t" style="left:964.00px;top:426.29px;font-size:11px;color:#2b3847;letter-spacing:0.020px;-webkit-text-stroke:0.2px #2b3847;">4</div>
<div class="t" style="left:1211.80px;top:426.29px;font-size:11px;color:#2b3847;letter-spacing:0.020px;-webkit-text-stroke:0.2px #2b3847;">Nov 26</div>
<svg style="left:68.1px;top:463.0px" width="21" height="21" viewBox="0 0 20 20"><circle cx="10" cy="10" r="10" fill="#a9c2f1"/><path d="M0.1 8.6 C1.5 6 3.5 4.6 5.2 5.6 C7.2 7 9.3 10.3 12 10.8 C14.5 11.2 17 10.4 19.8 11.2 A10 10 0 0 0 0.1 8.6Z" fill="#0c5ee3"/><circle cx="15.2" cy="15.6" r="4.6" fill="#fff"/><circle cx="15.2" cy="15.6" r="3.6" fill="url(#ig)" stroke="#a24bc4" stroke-width="0.8"/></svg>
<div class="t" style="left:117.60px;top:464.69px;font-size:11px;color:#2b3847;letter-spacing:0.146px;-webkit-text-stroke:0.15px #2b3847;text-decoration:underline;text-decoration-color:#7c828c;text-underline-offset:1.2px;text-decoration-thickness:1px;">Here’s your official reminder that holi...</div>
<div class="abs" style="left:118.2px;top:481.20000000000005px;width:74.8px;height:14px;background:#b6cbf3;border-radius:7px"></div>
<div class="t" style="left:123.50px;top:483.98px;font-size:9px;color:#1d2f55;letter-spacing:0.435px;-webkit-text-stroke:0.1px #1d2f55;">alexusonsocial</div>
<svg style="left:341.5px;top:477.2px" width="8" height="8" viewBox="0 0 8 8"><path d="M3.2 0.8H1.8A1 1 0 0 0 0.8 1.8V6.2A1 1 0 0 0 1.8 7.2H6.2A1 1 0 0 0 7.2 6.2V4.8" fill="none" stroke="#6f737a" stroke-width="1"/><path d="M3.8 4.2L7.2 0.8M4.8 0.8H7.2V3.2" fill="none" stroke="#6f737a" stroke-width="1"/></svg>
<div class="t" style="left:377.00px;top:465.49px;font-size:11px;color:#2b3847;letter-spacing:0.020px;-webkit-text-stroke:0.2px #2b3847;">Reel</div>
<div class="t" style="left:454.20px;top:465.49px;font-size:11px;color:#2b3847;letter-spacing:0.020px;-webkit-text-stroke:0.2px #2b3847;">23</div>
<div class="t" style="left:538.20px;top:465.49px;font-size:11px;color:#2b3847;letter-spacing:0.020px;-webkit-text-stroke:0.2px #2b3847;">285</div>
<div class="t" style="left:811.80px;top:465.49px;font-size:11px;color:#2b3847;letter-spacing:0.020px;-webkit-text-stroke:0.2px #2b3847;"><span style="letter-spacing:-1.3px">1</span>3</div>
<div class="t" style="left:885.60px;top:465.49px;font-size:11px;color:#2b3847;letter-spacing:0.020px;-webkit-text-stroke:0.2px #2b3847;">8</div>
<div class="t" style="left:964.00px;top:465.49px;font-size:11px;color:#2b3847;letter-spacing:0.020px;-webkit-text-stroke:0.2px #2b3847;">0</div>
<div class="t" style="left:1127.30px;top:465.49px;font-size:11px;color:#2b3847;letter-spacing:0.020px;-webkit-text-stroke:0.2px #2b3847;"><span style="letter-spacing:-1.3px">1</span>2,805</div>
<div class="t" style="left:1211.80px;top:465.49px;font-size:11px;color:#2b3847;letter-spacing:0.020px;-webkit-text-stroke:0.2px #2b3847;">Nov 25</div>
<svg style="left:68.1px;top:516.0px" width="21" height="21" viewBox="0 0 20 20"><circle cx="10" cy="10" r="10" fill="#a9c2f1"/><path d="M0.1 8.6 C1.5 6 3.5 4.6 5.2 5.6 C7.2 7 9.3 10.3 12 10.8 C14.5 11.2 17 10.4 19.8 11.2 A10 10 0 0 0 0.1 8.6Z" fill="#0c5ee3"/><circle cx="15.2" cy="15.6" r="4.6" fill="#fff"/><circle cx="15.2" cy="15.6" r="3.6" fill="url(#ig)" stroke="#a24bc4" stroke-width="0.8"/></svg>
<div class="t" style="left:117.60px;top:519.19px;font-size:11px;color:#2b3847;letter-spacing:0.207px;-webkit-text-stroke:0.15px #2b3847;text-decoration:underline;text-decoration-color:#7c828c;text-underline-offset:1.2px;text-decoration-thickness:1px;">These are the metrics that actually mat...</div>
<svg style="left:341.5px;top:521.5px" width="8" height="8" viewBox="0 0 8 8"><path d="M3.2 0.8H1.8A1 1 0 0 0 0.8 1.8V6.2A1 1 0 0 0 1.8 7.2H6.2A1 1 0 0 0 7.2 6.2V4.8" fill="none" stroke="#6f737a" stroke-width="1"/><path d="M3.8 4.2L7.2 0.8M4.8 0.8H7.2V3.2" fill="none" stroke="#6f737a" stroke-width="1"/></svg>
<div class="t" style="left:377.00px;top:518.49px;font-size:11px;color:#2b3847;letter-spacing:0.020px;-webkit-text-stroke:0.2px #2b3847;">Video</div>
<div class="t" style="left:454.20px;top:518.49px;font-size:11px;color:#2b3847;letter-spacing:0.020px;-webkit-text-stroke:0.2px #2b3847;">23</div>
<div class="t" style="left:538.20px;top:518.49px;font-size:11px;color:#2b3847;letter-spacing:0.020px;-webkit-text-stroke:0.2px #2b3847;">337</div>
<div class="t" style="left:811.80px;top:518.49px;font-size:11px;color:#2b3847;letter-spacing:0.020px;-webkit-text-stroke:0.2px #2b3847;"><span style="letter-spacing:-1.3px">1</span>4</div>
<div class="t" style="left:885.60px;top:518.49px;font-size:11px;color:#2b3847;letter-spacing:0.020px;-webkit-text-stroke:0.2px #2b3847;">3</div>
<div class="t" style="left:964.00px;top:518.49px;font-size:11px;color:#2b3847;letter-spacing:0.020px;-webkit-text-stroke:0.2px #2b3847;">2</div>
<div class="t" style="left:1127.30px;top:518.49px;font-size:11px;color:#2b3847;letter-spacing:0.020px;-webkit-text-stroke:0.2px #2b3847;">2<span style="letter-spacing:-1.3px">1</span>,<span style="letter-spacing:-1.3px">1</span>42</div>
<div class="t" style="left:1211.80px;top:518.49px;font-size:11px;color:#2b3847;letter-spacing:0.020px;-webkit-text-stroke:0.2px #2b3847;">Nov 23</div>
<svg style="left:68.1px;top:555.0px" width="21" height="21" viewBox="0 0 20 20"><circle cx="10" cy="10" r="10" fill="#a9c2f1"/><path d="M0.1 8.6 C1.5 6 3.5 4.6 5.2 5.6 C7.2 7 9.3 10.3 12 10.8 C14.5 11.2 17 10.4 19.8 11.2 A10 10 0 0 0 0.1 8.6Z" fill="#0c5ee3"/><circle cx="15.2" cy="15.6" r="4.6" fill="#fff"/><circle cx="15.2" cy="15.6" r="3.6" fill="url(#ig)" stroke="#a24bc4" stroke-width="0.8"/></svg>
<div class="t" style="left:117.60px;top:558.19px;font-size:11px;color:#2b3847;letter-spacing:0.059px;-webkit-text-stroke:0.15px #2b3847;text-decoration:underline;text-decoration-color:#7c828c;text-underline-offset:1.2px;text-decoration-thickness:1px;">Phone charger giving 100% battery.&nbsp;&nbsp;&nbsp; My...</div>
<svg style="left:341.5px;top:560.5px" width="8" height="8" viewBox="0 0 8 8"><path d="M3.2 0.8H1.8A1 1 0 0 0 0.8 1.8V6.2A1 1 0 0 0 1.8 7.2H6.2A1 1 0 0 0 7.2 6.2V4.8" fill="none" stroke="#6f737a" stroke-width="1"/><path d="M3.8 4.2L7.2 0.8M4.8 0.8H7.2V3.2" fill="none" stroke="#6f737a" stroke-width="1"/></svg>
<div class="t" style="left:377.00px;top:557.49px;font-size:11px;color:#2b3847;letter-spacing:0.020px;-webkit-text-stroke:0.2px #2b3847;">Image</div>
<div class="t" style="left:454.20px;top:557.49px;font-size:11px;color:#2b3847;letter-spacing:0.020px;-webkit-text-stroke:0.2px #2b3847;">2<span style="letter-spacing:-1.3px">1</span></div>
<div class="t" style="left:538.20px;top:557.49px;font-size:11px;color:#2b3847;letter-spacing:0.020px;-webkit-text-stroke:0.2px #2b3847;">749</div>
<div class="t" style="left:811.80px;top:557.49px;font-size:11px;color:#2b3847;letter-spacing:0.020px;-webkit-text-stroke:0.2px #2b3847;"><span style="letter-spacing:-1.3px">1</span>7</div>
<div class="t" style="left:885.60px;top:557.49px;font-size:11px;color:#2b3847;letter-spacing:0.020px;-webkit-text-stroke:0.2px #2b3847;">2</div>
<div class="t" style="left:964.00px;top:557.49px;font-size:11px;color:#2b3847;letter-spacing:0.020px;-webkit-text-stroke:0.2px #2b3847;">2</div>
<div class="t" style="left:1211.80px;top:557.49px;font-size:11px;color:#2b3847;letter-spacing:0.020px;-webkit-text-stroke:0.2px #2b3847;">Dec 2</div>
<svg style="left:68.1px;top:594.0px" width="21" height="21" viewBox="0 0 20 20"><circle cx="10" cy="10" r="10" fill="#a9c2f1"/><path d="M0.1 8.6 C1.5 6 3.5 4.6 5.2 5.6 C7.2 7 9.3 10.3 12 10.8 C14.5 11.2 17 10.4 19.8 11.2 A10 10 0 0 0 0.1 8.6Z" fill="#0c5ee3"/><circle cx="15.2" cy="15.6" r="4.6" fill="#fff"/><circle cx="15.2" cy="15.6" r="3.6" fill="url(#ig)" stroke="#a24bc4" stroke-width="0.8"/></svg>
<div class="t" style="left:117.60px;top:597.19px;font-size:11px;color:#2b3847;letter-spacing:-0.031px;-webkit-text-stroke:0.15px #2b3847;text-decoration:underline;text-decoration-color:#7c828c;text-underline-offset:1.2px;text-decoration-thickness:1px;"><span class="em">⚡</span> Social Media Updates <span class="em">⚡</span> <span class="em">📽</span> Meta shar...</div>
<svg style="left:341.5px;top:599.5px" width="8" height="8" viewBox="0 0 8 8"><path d="M3.2 0.8H1.8A1 1 0 0 0 0.8 1.8V6.2A1 1 0 0 0 1.8 7.2H6.2A1 1 0 0 0 7.2 6.2V4.8" fill="none" stroke="#6f737a" stroke-width="1"/><path d="M3.8 4.2L7.2 0.8M4.8 0.8H7.2V3.2" fill="none" stroke="#6f737a" stroke-width="1"/></svg>
<div class="t" style="left:377.00px;top:596.49px;font-size:11px;color:#2b3847;letter-spacing:0.020px;-webkit-text-stroke:0.2px #2b3847;">Reel</div>
<div class="t" style="left:454.20px;top:596.49px;font-size:11px;color:#2b3847;letter-spacing:0.020px;-webkit-text-stroke:0.2px #2b3847;"><span style="letter-spacing:-1.3px">1</span>7</div>
<div class="t" style="left:538.20px;top:596.49px;font-size:11px;color:#2b3847;letter-spacing:0.020px;-webkit-text-stroke:0.2px #2b3847;">358</div>
<div class="t" style="left:811.80px;top:596.49px;font-size:11px;color:#2b3847;letter-spacing:0.020px;-webkit-text-stroke:0.2px #2b3847;"><span style="letter-spacing:-1.3px">1</span>3</div>
<div class="t" style="left:885.60px;top:596.49px;font-size:11px;color:#2b3847;letter-spacing:0.020px;-webkit-text-stroke:0.2px #2b3847;">2</div>
<div class="t" style="left:964.00px;top:596.49px;font-size:11px;color:#2b3847;letter-spacing:0.020px;-webkit-text-stroke:0.2px #2b3847;">0</div>
<div class="t" style="left:1127.30px;top:596.49px;font-size:11px;color:#2b3847;letter-spacing:0.020px;-webkit-text-stroke:0.2px #2b3847;">8,<span style="letter-spacing:-1.3px">1</span>75</div>
<div class="t" style="left:1211.80px;top:596.49px;font-size:11px;color:#2b3847;letter-spacing:0.020px;-webkit-text-stroke:0.2px #2b3847;">Dec 6</div>
<svg style="left:68.1px;top:633.0px" width="21" height="21" viewBox="0 0 20 20"><circle cx="10" cy="10" r="10" fill="#a9c2f1"/><path d="M0.1 8.6 C1.5 6 3.5 4.6 5.2 5.6 C7.2 7 9.3 10.3 12 10.8 C14.5 11.2 17 10.4 19.8 11.2 A10 10 0 0 0 0.1 8.6Z" fill="#0c5ee3"/><circle cx="15.2" cy="15.6" r="4.6" fill="#fff"/><circle cx="15.2" cy="15.6" r="3.6" fill="url(#ig)" stroke="#a24bc4" stroke-width="0.8"/></svg>
<div class="t" style="left:117.60px;top:636.19px;font-size:11px;color:#2b3847;letter-spacing:0.043px;-webkit-text-stroke:0.15px #2b3847;text-decoration:underline;text-decoration-color:#7c828c;text-underline-offset:1.2px;text-decoration-thickness:1px;"><span class="em">⚡</span>Social Media updates<span class="em">⚡</span> <span class="em">🔍</span>Facebook intr...</div>
<svg style="left:341.5px;top:638.5px" width="8" height="8" viewBox="0 0 8 8"><path d="M3.2 0.8H1.8A1 1 0 0 0 0.8 1.8V6.2A1 1 0 0 0 1.8 7.2H6.2A1 1 0 0 0 7.2 6.2V4.8" fill="none" stroke="#6f737a" stroke-width="1"/><path d="M3.8 4.2L7.2 0.8M4.8 0.8H7.2V3.2" fill="none" stroke="#6f737a" stroke-width="1"/></svg>
<div class="t" style="left:377.00px;top:635.49px;font-size:11px;color:#2b3847;letter-spacing:0.020px;-webkit-text-stroke:0.2px #2b3847;">Carousel</div>
<div class="t" style="left:454.20px;top:635.49px;font-size:11px;color:#2b3847;letter-spacing:0.020px;-webkit-text-stroke:0.2px #2b3847;"><span style="letter-spacing:-1.3px">1</span>7</div>
<div class="t" style="left:538.20px;top:635.49px;font-size:11px;color:#2b3847;letter-spacing:0.020px;-webkit-text-stroke:0.2px #2b3847;">593</div>
<div class="t" style="left:811.80px;top:635.49px;font-size:11px;color:#2b3847;letter-spacing:0.020px;-webkit-text-stroke:0.2px #2b3847;"><span style="letter-spacing:-1.3px">1</span>3</div>
<div class="t" style="left:885.60px;top:635.49px;font-size:11px;color:#2b3847;letter-spacing:0.020px;-webkit-text-stroke:0.2px #2b3847;"><span style="letter-spacing:-1.3px">1</span></div>
<div class="t" style="left:964.00px;top:635.49px;font-size:11px;color:#2b3847;letter-spacing:0.020px;-webkit-text-stroke:0.2px #2b3847;">0</div>
<div class="t" style="left:1211.80px;top:635.49px;font-size:11px;color:#2b3847;letter-spacing:0.020px;-webkit-text-stroke:0.2px #2b3847;">Nov 2<span style="letter-spacing:-1.3px">1</span></div>
<svg style="left:68.1px;top:672.0px" width="21" height="21" viewBox="0 0 20 20"><circle cx="10" cy="10" r="10" fill="#a9c2f1"/><path d="M0.1 8.6 C1.5 6 3.5 4.6 5.2 5.6 C7.2 7 9.3 10.3 12 10.8 C14.5 11.2 17 10.4 19.8 11.2 A10 10 0 0 0 0.1 8.6Z" fill="#0c5ee3"/><circle cx="15.2" cy="15.6" r="4.6" fill="#fff"/><circle cx="15.2" cy="15.6" r="3.6" fill="url(#ig)" stroke="#a24bc4" stroke-width="0.8"/></svg>
<div class="t" style="left:117.60px;top:675.19px;font-size:11px;color:#2b3847;letter-spacing:0.095px;-webkit-text-stroke:0.15px #2b3847;text-decoration:underline;text-decoration-color:#7c828c;text-underline-offset:1.2px;text-decoration-thickness:1px;">December is here and If you’re running ...</div>
<svg style="left:341.5px;top:677.5px" width="8" height="8" viewBox="0 0 8 8"><path d="M3.2 0.8H1.8A1 1 0 0 0 0.8 1.8V6.2A1 1 0 0 0 1.8 7.2H6.2A1 1 0 0 0 7.2 6.2V4.8" fill="none" stroke="#6f737a" stroke-width="1"/><path d="M3.8 4.2L7.2 0.8M4.8 0.8H7.2V3.2" fill="none" stroke="#6f737a" stroke-width="1"/></svg>
<div class="t" style="left:377.00px;top:674.49px;font-size:11px;color:#2b3847;letter-spacing:0.020px;-webkit-text-stroke:0.2px #2b3847;">Carousel</div>
<div class="t" style="left:454.20px;top:674.49px;font-size:11px;color:#2b3847;letter-spacing:0.020px;-webkit-text-stroke:0.2px #2b3847;"><span style="letter-spacing:-1.3px">1</span>6</div>
<div class="t" style="left:538.20px;top:674.49px;font-size:11px;color:#2b3847;letter-spacing:0.020px;-webkit-text-stroke:0.2px #2b3847;">733</div>
<div class="t" style="left:811.80px;top:674.49px;font-size:11px;color:#2b3847;letter-spacing:0.020px;-webkit-text-stroke:0.2px #2b3847;"><span style="letter-spacing:-1.3px">1</span><span style="letter-spacing:-1.3px">1</span></div>
<div class="t" style="left:885.60px;top:674.49px;font-size:11px;color:#2b3847;letter-spacing:0.020px;-webkit-text-stroke:0.2px #2b3847;">0</div>
<div class="t" style="left:964.00px;top:674.49px;font-size:11px;color:#2b3847;letter-spacing:0.020px;-webkit-text-stroke:0.2px #2b3847;"><span style="letter-spacing:-1.3px">1</span></div>
<div class="t" style="left:1211.80px;top:674.49px;font-size:11px;color:#2b3847;letter-spacing:0.020px;-webkit-text-stroke:0.2px #2b3847;">Dec <span style="letter-spacing:-1.3px">1</span></div>
<svg style="left:68.1px;top:711.0px" width="21" height="21" viewBox="0 0 20 20"><circle cx="10" cy="10" r="10" fill="#a9c2f1"/><path d="M0.1 8.6 C1.5 6 3.5 4.6 5.2 5.6 C7.2 7 9.3 10.3 12 10.8 C14.5 11.2 17 10.4 19.8 11.2 A10 10 0 0 0 0.1 8.6Z" fill="#0c5ee3"/><circle cx="15.2" cy="15.6" r="4.6" fill="#fff"/><circle cx="15.2" cy="15.6" r="3.6" fill="url(#ig)" stroke="#a24bc4" stroke-width="0.8"/></svg>
<div class="t" style="left:117.60px;top:714.19px;font-size:11px;color:#2b3847;letter-spacing:0.038px;-webkit-text-stroke:0.15px #2b3847;text-decoration:underline;text-decoration-color:#7c828c;text-underline-offset:1.2px;text-decoration-thickness:1px;"><span class="em">⚡</span>Social updates of the month<span class="em">⚡</span> <span class="em">📊</span> Ins...</div>
<svg style="left:341.5px;top:716.5px" width="8" height="8" viewBox="0 0 8 8"><path d="M3.2 0.8H1.8A1 1 0 0 0 0.8 1.8V6.2A1 1 0 0 0 1.8 7.2H6.2A1 1 0 0 0 7.2 6.2V4.8" fill="none" stroke="#6f737a" stroke-width="1"/><path d="M3.8 4.2L7.2 0.8M4.8 0.8H7.2V3.2" fill="none" stroke="#6f737a" stroke-width="1"/></svg>
<div class="t" style="left:377.00px;top:713.49px;font-size:11px;color:#2b3847;letter-spacing:0.020px;-webkit-text-stroke:0.2px #2b3847;">Carousel</div>
<div class="t" style="left:454.20px;top:713.49px;font-size:11px;color:#2b3847;letter-spacing:0.020px;-webkit-text-stroke:0.2px #2b3847;"><span style="letter-spacing:-1.3px">1</span>6</div>
<div class="t" style="left:538.20px;top:713.49px;font-size:11px;color:#2b3847;letter-spacing:0.020px;-webkit-text-stroke:0.2px #2b3847;">778</div>
<div class="t" style="left:811.80px;top:713.49px;font-size:11px;color:#2b3847;letter-spacing:0.020px;-webkit-text-stroke:0.2px #2b3847;"><span style="letter-spacing:-1.3px">1</span>3</div>
<div class="t" style="left:885.60px;top:713.49px;font-size:11px;color:#2b3847;letter-spacing:0.020px;-webkit-text-stroke:0.2px #2b3847;">0</div>
<div class="t" style="left:964.00px;top:713.49px;font-size:11px;color:#2b3847;letter-spacing:0.020px;-webkit-text-stroke:0.2px #2b3847;">0</div>
<div class="t" style="left:1211.80px;top:713.49px;font-size:11px;color:#2b3847;letter-spacing:0.020px;-webkit-text-stroke:0.2px #2b3847;">Nov 28</div>
</body></html>
